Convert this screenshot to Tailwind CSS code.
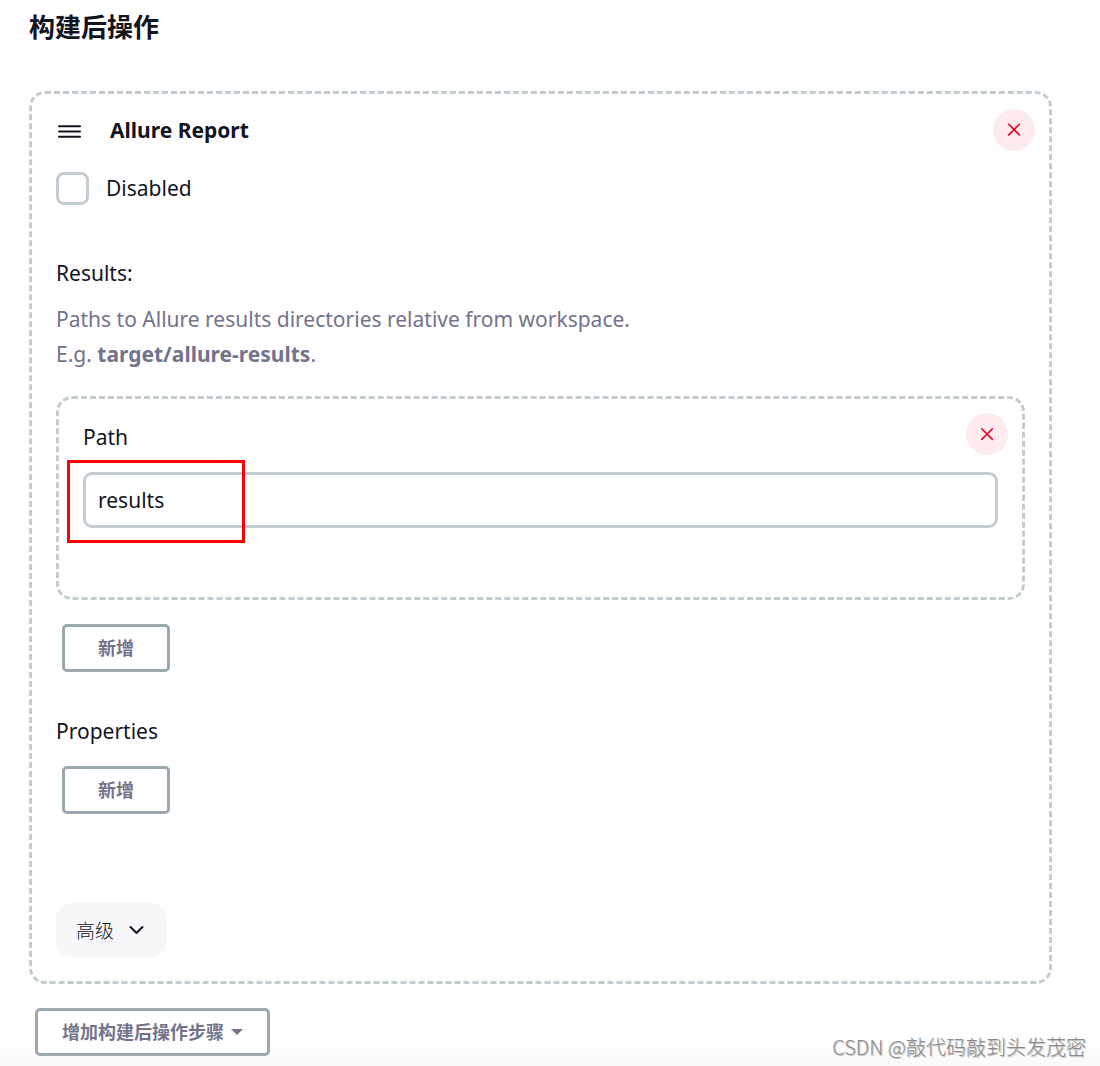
<!DOCTYPE html>
<html lang="zh-CN">
<head>
  <meta charset="UTF-8">
  <meta name="viewport" content="width=device-width, initial-scale=1.0">
  <title>构建后操作</title>
  <script src="https://cdn.jsdelivr.net/npm/@tailwindcss/browser@4"></script>
</head>
<body class="relative min-h-screen bg-white font-['Noto_Sans','Noto_Sans_CJK_SC',sans-serif] text-[21px] leading-[35px] text-[#14141f]">

  <!-- Fade at the bottom of the page -->
  <div class="absolute inset-x-0 bottom-0 h-7 bg-linear-to-b from-white to-[#f9f9f9]"></div>

  <main class="relative pt-1.5 pr-12 pb-2.5 pl-[29px]">
    <h2 class="font-['Noto_Sans_CJK_SC',sans-serif] text-[26px] leading-[40px] font-bold">构建后操作</h2>

    <!-- Allure Report step -->
    <section class="mt-[45px] rounded-[16px] border-3 border-dashed border-[#c3ccd1] pt-[15px] pb-6">
      <div class="flex items-center justify-between pr-3.5 pl-6">
        <div class="flex items-center gap-7">
          <svg class="h-[26px] w-[26px]" viewBox="0 0 26 26" fill="none" stroke="#14141f" stroke-width="2" stroke-linecap="round" aria-hidden="true">
            <path d="M3 9.3h21M3 14.5h21M3 19.7h21"/>
          </svg>
          <h3 class="font-bold">Allure Report</h3>
        </div>
        <button type="button" aria-label="Delete Allure Report" class="flex h-[42px] w-[42px] items-center justify-center rounded-full bg-[#fdebed] text-[#e6001f]">
          <svg class="h-3.5 w-3.5" viewBox="0 0 14 14" fill="none" stroke="currentColor" stroke-width="1.6" stroke-linecap="round" aria-hidden="true">
            <path d="M1.8 1.3l10.6 10.6M12.4 1.3L1.8 11.9"/>
          </svg>
        </button>
      </div>

      <div class="px-6">
        <div class="mt-5 flex items-center gap-[17px]">
          <input type="checkbox" id="disabled" class="h-[33px] w-[33px] appearance-none rounded-[8px] border-3 border-[#c3ccd1] bg-white checked:bg-[#c3ccd1]">
          <label for="disabled">Disabled</label>
        </div>

        <h4 class="mt-[50px]">Results:</h4>
        <p class="mt-[11px] text-[#73738c]">
          Paths to Allure results directories relative from workspace.<br>
          E.g. <b>target/allure-results</b>.
        </p>

        <div class="mt-6 rounded-[16px] border-3 border-dashed border-[#c3ccd1] pt-3.5 pb-[69px]">
          <div class="flex items-end justify-between pr-3.5 pl-6">
            <label for="path">Path</label>
            <button type="button" aria-label="Delete path" class="flex h-[42px] w-[42px] items-center justify-center rounded-full bg-[#fdebed] text-[#e6001f]">
              <svg class="h-3.5 w-3.5" viewBox="0 0 14 14" fill="none" stroke="currentColor" stroke-width="1.6" stroke-linecap="round" aria-hidden="true">
                <path d="M1.8 1.8l10.6 10.6M12.4 1.8L1.8 12.4"/>
              </svg>
            </button>
          </div>
          <div class="relative mx-6 mt-[17px]">
            <input type="text" id="path" value="results" class="block h-14 w-full rounded-[9px] border-3 border-[#c3ccd1] bg-white px-3">
            <!-- Highlight around the value -->
            <div class="pointer-events-none absolute -top-3 -left-4 h-[83px] w-[178px] border-3 border-[#ff0000]"></div>
          </div>
        </div>

        <button type="button" class="mt-6 ml-1.5 flex h-12 items-center rounded-[5px] border-3 border-[#9aa8b0] bg-white px-[33px] pb-0.5 font-['Noto_Sans_CJK_SC',sans-serif] text-[18px] font-bold text-[#73738c]">新增</button>

        <h4 class="mt-[42px]">Properties</h4>
        <button type="button" class="mt-[17px] ml-1.5 flex h-12 items-center rounded-[5px] border-3 border-[#9aa8b0] bg-white px-[33px] pb-0.5 font-['Noto_Sans_CJK_SC',sans-serif] text-[18px] font-bold text-[#73738c]">新增</button>

        <button type="button" class="mt-[89px] flex h-[54px] items-center gap-[15px] rounded-[16px] bg-[#f7f7fa] px-5 pb-0.5 font-['Noto_Sans_CJK_SC',sans-serif] text-[19px] font-light">
          高级
          <svg class="h-[18px] w-[18px]" viewBox="0 0 18 18" fill="none" stroke="currentColor" stroke-width="2" stroke-linecap="round" stroke-linejoin="round" aria-hidden="true">
            <path d="M1.5 7L7.5 13L13.5 7"/>
          </svg>
        </button>
      </div>
    </section>

    <button type="button" class="mt-6 ml-1.5 flex h-12 items-center gap-[7px] rounded-[5px] border-3 border-[#9aa8b0] bg-white px-6 pb-0.5 font-['Noto_Sans_CJK_SC',sans-serif] text-[18px] font-bold text-[#73738c]">
      增加构建后操作步骤
      <svg class="h-3 w-3" viewBox="0 0 12 12" fill="currentColor" aria-hidden="true">
        <path d="M0 4h12L6 10z"/>
      </svg>
    </button>
  </main>

  <p class="absolute right-3.5 bottom-0.5 font-['Noto_Sans_CJK_SC',sans-serif] text-[20px] font-light text-[#8a8a8a] [text-shadow:1px_1px_1px_#bbbbbb]">CSDN @敲代码敲到头发茂密</p>

</body>
</html>
